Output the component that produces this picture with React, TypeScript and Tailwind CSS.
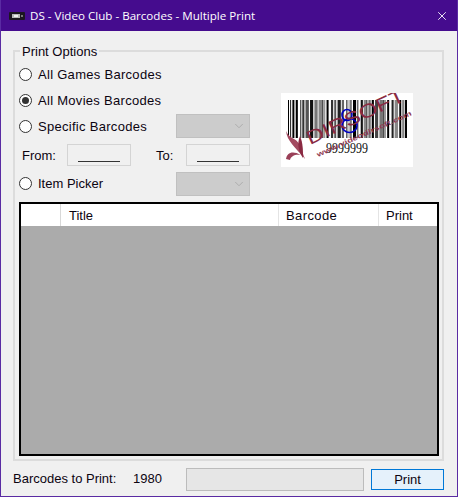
import { ChevronDown, X } from "lucide-react";

// width, colour pairs read off the reference from left to right
const bars: [number, string][] = [
  [1, "#000"], [1, "#fff"], [1, "#000"], [1, "#fff"], [2, "#000"], [1, "#fff"], [2, "#000"], [2, "#fff"],
  [1, "#444"], [1, "#bbb"], [2, "#333"], [1, "#ccc"], [3, "#555"], [1, "#fff"], [3, "#111"], [1, "#ddd"],
  [3, "#777"], [1, "#ccc"], [3, "#888"], [1, "#333"], [2, "#999"], [1, "#eee"], [2, "#000"], [2, "#fff"],
  [2, "#333"], [1, "#ddd"], [2, "#555"], [1, "#fff"], [3, "#222"], [1, "#ddd"], [2, "#666"], [2, "#fff"],
  [1, "#000"], [2, "#ccc"], [2, "#777"], [1, "#fff"], [3, "#000"], [1, "#fff"], [1, "#000"], [2, "#fff"],
  [2, "#111"], [1, "#ddd"], [2, "#888"], [1, "#333"], [2, "#aaa"], [1, "#000"], [1, "#fff"], [2, "#000"],
  [1, "#fff"], [3, "#444"], [1, "#eee"], [3, "#777"], [1, "#222"], [2, "#999"], [1, "#fff"], [2, "#000"],
  [2, "#fff"], [2, "#222"], [1, "#ddd"], [3, "#888"], [1, "#fff"], [2, "#000"], [1, "#fff"], [1, "#000"],
  [1, "#fff"], [2, "#000"],
];
const barTotal = bars.reduce((sum, [w]) => sum + w, 0);

function BarcodeLogo() {
  const scale = 119 / barTotal;
  let x = 7;
  return (
    <svg width="132" height="74" viewBox="0 0 132 74" className="bg-white shrink-0">
      {bars.map(([w, c], i) => {
        const r = <rect key={i} x={x} y={7} width={w * scale} height={38} fill={c} />;
        x += w * scale;
        return r;
      })}
      <text x="45" y="60" fontFamily="'Liberation Serif', serif" fontSize="14" fill="#111" textLength="42" lengthAdjust="spacingAndGlyphs">
        9999999
      </text>
      <ellipse cx="66" cy="22" rx="5" ry="5.5" fill="none" stroke="#0000c0" strokeWidth="1.6" />
      <ellipse cx="68.5" cy="32.5" rx="7.5" ry="7" fill="none" stroke="#0000c0" strokeWidth="1.6" />
      <g transform="rotate(-25 29 52)">
        <text x="29" y="52" fontFamily="'Liberation Sans', sans-serif" fontSize="19" textLength="106" lengthAdjust="spacingAndGlyphs" fill="#8a2a42">
          DIRSOFT
        </text>
      </g>
      <g transform="rotate(-24 37 64)">
        <text x="37" y="64" fontFamily="'Liberation Sans', sans-serif" fontSize="7" fontWeight="700" fill="#8f3a52" textLength="103" lengthAdjust="spacingAndGlyphs">
          www.videodirsoft.com
        </text>
      </g>
      <path d="M5 38 C6 48 14 54 24 66 C20 56 20 50 13 46 C9 44 7 42 5 38Z" fill="#a34a60" />
      <path d="M19 43 C16 50 17 58 22 65 C22 57 22 50 19 43Z" fill="#8a2a42" />
      <path d="M5 66 C6 60 11 57 20 62 C14 61 10 63 9 67Z" fill="#9a4058" />
    </svg>
  );
}

function Radio({ label, checked, wide }: { label: string; checked?: boolean; wide?: boolean }) {
  return (
    <label className="flex items-center gap-[6px] h-[14px]">
      <span className="w-[13px] h-[13px] rounded-full border border-[#333] bg-white flex items-center justify-center shrink-0">
        {checked && <span className="w-[7px] h-[7px] rounded-full bg-[#333]" />}
      </span>
      <span className={wide ? "tracking-[0.29px]" : ""}>{label}</span>
    </label>
  );
}

function Combo() {
  return (
    <div className="w-[74px] h-[24px] bg-[#cccccc] border border-[#c0c0c0] flex items-center justify-end pr-[3px] shrink-0">
      <ChevronDown className="w-[14px] h-[14px] text-[#a8a8a8]" strokeWidth={1.5} />
    </div>
  );
}

function Mask() {
  return (
    <div className="w-[64px] h-[22px] bg-[#f0f0f0] border border-[#d4d4d4] flex items-end justify-center pb-[3px] shrink-0">
      <span className="w-[42px] h-px bg-[#333]" />
    </div>
  );
}

export default function App() {
  return (
    <div className="w-[458px] h-[497px] flex flex-col bg-[#f0f0f0] border-x border-b border-[#5a2ba3] text-[13px] leading-none text-[#0c0410] font-['Liberation_Sans',sans-serif] overflow-hidden">
      <div className="h-[31px] shrink-0 bg-[#450c8e] flex items-center text-white text-[11.6px] font-['Open_Sans',sans-serif]">
        <svg width="16" height="8" viewBox="0 0 16 8" className="ml-[8px] mr-[5px] shrink-0">
          <rect width="16" height="8" rx="1" fill="#1c1620" />
          <rect x="3" y="2" width="8" height="4" fill="#b8b8b8" />
          <rect x="5" y="3" width="4" height="2" fill="#f0f0f0" />
          <rect x="12" y="3" width="2" height="2" fill="#777" />
        </svg>
        <span>DS - Video Club - Barcodes - Multiple Print</span>
        <X className="w-[14px] h-[14px] ml-auto mr-[8px]" strokeWidth={1.5} />
      </div>

      <div className="relative mt-[19px] ml-[12px] mr-[13px] h-[411px] border-2 border-[#dcdcdc] pl-[4px] pr-[4px] shrink-0">
        <span className="absolute -top-[7px] left-[5px] bg-[#f0f0f0] px-[2px]">Print Options</span>
        <div className="flex mt-[15px]">
          <div className="w-[231px] shrink-0 flex flex-col">
            <Radio label="All Games Barcodes" wide />
            <div className="mt-[12px]">
              <Radio label="All Movies Barcodes" wide checked />
            </div>
            <div className="flex items-center justify-between mt-[7px] h-[24px]">
              <Radio label="Specific Barcodes" wide />
              <Combo />
            </div>
            <div className="flex items-center mt-[6px] h-[22px]">
              <span className="ml-[3px] w-[45px]">From:</span>
              <Mask />
              <span className="ml-[25px] w-[30px]">To:</span>
              <Mask />
            </div>
            <div className="flex items-center justify-between mt-[6px] h-[24px]">
              <div className="pb-[2px]">
                <Radio label="Item Picker" />
              </div>
              <Combo />
            </div>
          </div>
          <div className="ml-[31px] mt-[26px]">
            <BarcodeLogo />
          </div>
        </div>
        <div className="mt-[6px] w-[420px] h-[254px] border-2 border-black bg-[#ababab]">
          <div className="h-[22px] bg-white flex items-center">
            <div className="w-[40px] h-full border-r border-[#d8d8d8]" />
            <div className="w-[218px] h-full border-r border-[#e4e4e4] flex items-center pl-[8px]">Title</div>
            <div className="w-[100px] h-full border-r border-[#e4e4e4] flex items-center pl-[7px] tracking-[0.4px]">Barcode</div>
            <div className="flex-1 h-full flex items-center pl-[7px]">Print</div>
          </div>
        </div>
      </div>

      <div className="flex items-center mt-[7px]">
        <span className="ml-[12px] w-[120px] pb-[2px]">Barcodes to Print:</span>
        <span className="w-[53px] pb-[2px]">1980</span>
        <div className="w-[178px] h-[23px] bg-[#e6e6e6] border border-[#bcbcbc]" />
        <button type="button" className="ml-[7px] w-[73px] h-[21px] bg-[#e5f1fb] border border-[#0078d7] flex items-center justify-center">
          Print
        </button>
      </div>
    </div>
  );
}
